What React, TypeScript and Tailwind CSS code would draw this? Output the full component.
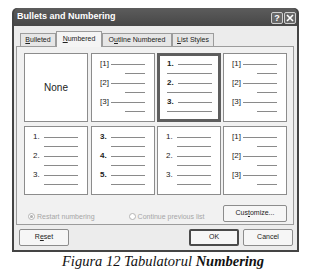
import React from 'react';

type Variant = 'bracket' | 'dot' | 'full';

function Card({ labels, bold, variant, selected }: { labels: string[]; bold?: boolean; variant: Variant; selected?: boolean }) {
  return (
    <div
      className={`w-[64px] h-[69px] bg-white flex flex-col ${
        selected
          ? 'border-[3px] border-[#5e5e5e] pl-[7px] pr-[6px] pt-[3px]'
          : 'border border-[#8c8c8c] pl-[8px] pr-[9px] pt-[5px]'
      }`}
    >
      {labels.map((l) => (
        <div key={l} className="h-[19px] flex flex-col">
          <div className="h-[10px] flex items-center">
            <span className={`w-[11px] text-[8px] leading-none text-[#222] ${bold ? 'font-bold' : ''}`}>{l}</span>
            <div className="flex-1 h-px bg-[#8a8a8a]" />
          </div>
          {variant === 'bracket' && <div className="mt-[4px] h-px w-[20px] ml-auto bg-[#8a8a8a]" />}
          {variant === 'dot' && <div className="mt-[4px] h-px ml-[11px] bg-[#8a8a8a]" />}
          {variant === 'full' && <div className="mt-[4px] h-px bg-[#8a8a8a]" />}
        </div>
      ))}
    </div>
  );
}

function Btn({ children, def, className = '' }: { children: React.ReactNode; def?: boolean; className?: string }) {
  return (
    <div
      className={`h-[17px] w-[50px] flex items-center justify-center text-[7px] text-[#222] bg-[#f6f6f6] rounded-[2px] ${
        def ? 'border-2 border-[#4a4a4a]' : 'border border-[#8c8c8c]'
      } ${className}`}
    >
      {children}
    </div>
  );
}

function Tab({ children, active, w }: { children: React.ReactNode; active?: boolean; w: string }) {
  return (
    <div
      className={`${w} flex items-center justify-center text-[7px] text-[#222] border-t border-l border-r border-[#9c9c9c] ${
        active ? 'h-[16px] bg-[#f4f4f4] -mb-px z-10' : 'h-[13px] bg-[#e6e6e6]'
      }`}
    >
      {children}
    </div>
  );
}

export default function App() {
  return (
    <div className="w-[311px] h-[277px] bg-white font-[family-name:Liberation_Sans,Arial,sans-serif] overflow-hidden">
      <div className="ml-[12px] mt-[8px] w-[287px] h-[244px] flex flex-col rounded-t-[5px] bg-[#444] p-[2px] pt-0">
        {/* title bar */}
        <div className="h-[18px] flex items-center justify-between pl-[3px] pr-[1px] bg-gradient-to-b from-[#5c5c5c] to-[#474747] rounded-t-[5px]">
          <span className="text-[9px] font-bold text-white">Bullets and Numbering</span>
          <div className="flex gap-[1px] mt-[2px]">
            <div className="w-[12px] h-[12px] rounded-[2px] border border-[#cfcfcf] bg-[#686868] flex items-center justify-center text-[9px] font-bold text-white leading-none">?</div>
            <div className="w-[12px] h-[12px] rounded-[2px] border border-[#cfcfcf] bg-[#686868] flex items-center justify-center">
              <svg width="8" height="8" viewBox="0 0 8 8">
                <path d="M1 1L7 7M7 1L1 7" stroke="#fff" strokeWidth="1.6" />
              </svg>
            </div>
          </div>
        </div>
        {/* body */}
        <div className="flex-1 bg-[#ececec] flex flex-col px-[2px] pt-[5px]">
          <div className="flex items-end pl-[4px]">
            <Tab w="w-[36px]"><span><u>B</u>ulleted</span></Tab>
            <Tab w="w-[46px]" active><span><u>N</u>umbered</span></Tab>
            <Tab w="w-[70px]"><span>O<u>u</u>tline Numbered</span></Tab>
            <Tab w="w-[42px]"><span><u>L</u>ist Styles</span></Tab>
          </div>
          <div className="w-[278px] h-[179px] border border-[#9c9c9c] bg-[#f1f1f1] pl-[7px] pt-[6px] flex flex-col">
            <div className="flex flex-col gap-[4px]">
              <div className="flex gap-[2px]">
                <div className="w-[64px] h-[69px] bg-white border border-[#8c8c8c] mr-[1px] flex items-center justify-center text-[10px] text-[#222]">None</div>
                <Card labels={['[1]', '[2]', '[3]']} variant="bracket" />
                <Card labels={['1.', '2.', '3.']} variant="full" bold selected />
                <Card labels={['[1]', '[2]', '[3]']} variant="bracket" />
              </div>
              <div className="flex gap-[2px]">
                <div className="mr-[1px]">
                  <Card labels={['1.', '2.', '3.']} variant="dot" />
                </div>
                <Card labels={['3.', '4.', '5.']} variant="dot" bold />
                <Card labels={['1.', '2.', '3.']} variant="dot" />
                <Card labels={['[1]', '[2]', '[3]']} variant="bracket" />
              </div>
            </div>
            <div className="flex items-end mt-[10px] pr-[6px]">
              <div className="flex items-center gap-[2px] ml-[4px] text-[7px] text-[#a6a6a6]">
                <div className="w-[7px] h-[7px] rounded-full border border-[#b4b4b4] bg-white flex items-center justify-center">
                  <div className="w-[3px] h-[3px] rounded-full bg-[#b0b0b0]" />
                </div>
                <span>Restart numbering</span>
              </div>
              <div className="flex items-center gap-[2px] ml-[34px] text-[7px] text-[#a6a6a6]">
                <div className="w-[7px] h-[7px] rounded-full border border-[#b4b4b4] bg-white" />
                <span>Continue previous list</span>
              </div>
              <Btn className="ml-auto w-[64px] h-[15px]"><span>Cus<u>t</u>omize...</span></Btn>
            </div>
          </div>
          <div className="flex items-center mt-[4px] pl-[3px]">
            <Btn><span>R<u>e</u>set</span></Btn>
            <Btn def className="ml-auto">OK</Btn>
            <Btn className="ml-[4px] mr-[2px]">Cancel</Btn>
          </div>
        </div>
      </div>
      <div className="pl-[62px] pt-[1px] font-[family-name:Liberation_Serif,serif] italic text-[14.5px] leading-[16px] text-[#111]">
        Figura 12 Tabulatorul <span className="font-bold">Numbering</span>
      </div>
    </div>
  );
}
